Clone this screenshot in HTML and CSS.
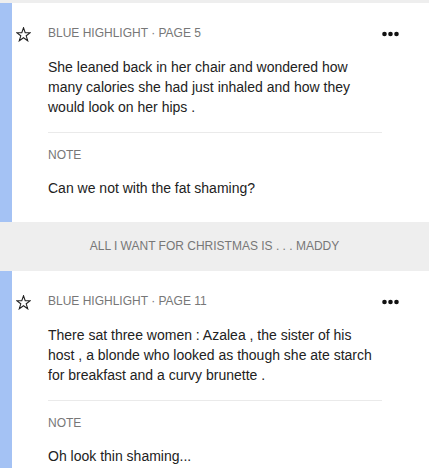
FILE: index.html
```html
<!DOCTYPE html>
<html>
<head>
<meta charset="utf-8">
<link rel="stylesheet" href="styles.css">
</head>
<body>
<div class="page">
  <div class="card">
    <div class="star-col">
      <svg class="star" width="15" height="15" viewBox="0 0 15 15"><polygon points="7.5,0.8 9.2,5.6 14.3,5.7 10.2,8.8 11.7,13.8 7.5,10.8 3.3,13.8 4.8,8.8 0.7,5.7 5.8,5.6" fill="none" stroke="#222" stroke-width="1.1" stroke-linejoin="miter"/></svg>
    </div>
    <div class="main">
      <div class="meta">BLUE HIGHLIGHT · PAGE 5</div>
      <div class="quote">She leaned back in her chair and wondered how many calories she had just inhaled and how they would look on her hips .</div>
      <div class="note">
        <div class="meta">NOTE</div>
        <div class="note-text">Can we not with the fat shaming?</div>
      </div>
    </div>
    <div class="menu">
      <svg width="18" height="6" viewBox="0 0 18 6"><circle cx="2.5" cy="3" r="2.3" fill="#111"/><circle cx="8.5" cy="3" r="2.3" fill="#111"/><circle cx="14.5" cy="3" r="2.3" fill="#111"/></svg>
    </div>
  </div>
  <div class="chapter">ALL I WANT FOR CHRISTMAS IS . . . MADDY</div>
  <div class="card">
    <div class="star-col">
      <svg class="star" width="15" height="15" viewBox="0 0 15 15"><polygon points="7.5,0.8 9.2,5.6 14.3,5.7 10.2,8.8 11.7,13.8 7.5,10.8 3.3,13.8 4.8,8.8 0.7,5.7 5.8,5.6" fill="none" stroke="#222" stroke-width="1.1" stroke-linejoin="miter"/></svg>
    </div>
    <div class="main">
      <div class="meta">BLUE HIGHLIGHT · PAGE 11</div>
      <div class="quote">There sat three women : Azalea , the sister of his host , a blonde who looked as though she ate starch for breakfast and a curvy brunette .</div>
      <div class="note">
        <div class="meta">NOTE</div>
        <div class="note-text">Oh look thin shaming...</div>
      </div>
    </div>
    <div class="menu">
      <svg width="18" height="6" viewBox="0 0 18 6"><circle cx="2.5" cy="3" r="2.3" fill="#111"/><circle cx="8.5" cy="3" r="2.3" fill="#111"/><circle cx="14.5" cy="3" r="2.3" fill="#111"/></svg>
    </div>
  </div>
</div>
</body>
</html>
```
FILE: styles.css
```css
html, body {
  margin: 0;
  padding: 0;
  background: #eeeeee;
}
body {
  font-family: "Liberation Sans", Arial, sans-serif;
  color: #222;
}
.page {
  padding-top: 3px;
}
.card {
  display: flex;
  align-items: flex-start;
  background: #fff;
  border-left: 12px solid #a4c2f4;
  padding: 22px 0 24px 0;
}
.star-col {
  width: 36px;
  flex: none;
}
.star {
  display: block;
  margin: 2px 0 0 4px;
}
.main {
  width: 334px;
  flex: none;
}
.meta {
  font-size: 12px;
  line-height: 16px;
  color: #777;
}
.quote {
  font-size: 14px;
  line-height: 20px;
  margin-top: 16px;
  padding-right: 0.5px;
  padding-bottom: 15px;
  border-bottom: 1px solid #eaeaea;
}
.note {
  padding-top: 14px;
}
.note-text {
  font-size: 14px;
  line-height: 20px;
  margin-top: 15px;
}
.menu {
  flex: none;
  padding-top: 6px;
}
.menu svg {
  display: block;
}
.chapter {
  height: 49px;
  line-height: 49px;
  text-align: center;
  font-size: 12px;
  color: #777;
}
```
